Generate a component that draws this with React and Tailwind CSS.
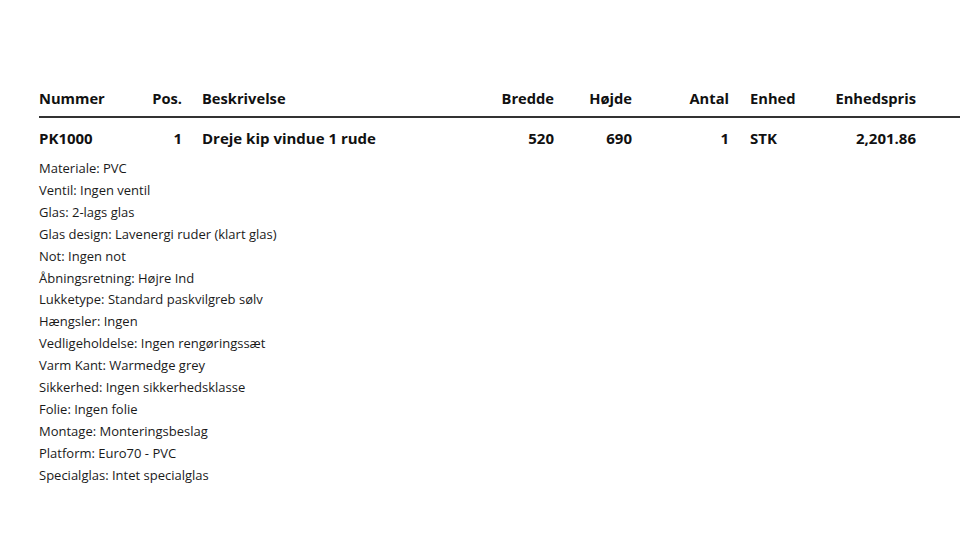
import React from "react";

const details = [
  "Materiale: PVC",
  "Ventil: Ingen ventil",
  "Glas: 2-lags glas",
  "Glas design: Lavenergi ruder (klart glas)",
  "Not: Ingen not",
  "Åbningsretning: Højre Ind",
  "Lukketype: Standard paskvilgreb sølv",
  "Hængsler: Ingen",
  "Vedligeholdelse: Ingen rengøringssæt",
  "Varm Kant: Warmedge grey",
  "Sikkerhed: Ingen sikkerhedsklasse",
  "Folie: Ingen folie",
  "Montage: Monteringsbeslag",
  "Platform: Euro70 - PVC",
  "Specialglas: Intet specialglas",
];

function Row({ cells }) {
  return (
    <div className="flex">
      <div className="w-[103px]">{cells[0]}</div>
      <div className="w-[40px] text-right">{cells[1]}</div>
      <div className="w-[292px] pl-[20px]">{cells[2]}</div>
      <div className="w-[80px] text-right">{cells[3]}</div>
      <div className="w-[78px] text-right">{cells[4]}</div>
      <div className="w-[97px] text-right">{cells[5]}</div>
      <div className="w-[91px] pl-[21px]">{cells[6]}</div>
      <div className="w-[96px] text-right">{cells[7]}</div>
    </div>
  );
}

export default function App() {
  return (
    <div
      className="w-[960px] h-[556px] bg-white overflow-hidden text-[#111]"
      style={{ fontFamily: '"Open Sans", "Noto Sans", sans-serif' }}
    >
      <div className="pl-[39px] pt-[88px]">
        <div className="font-bold text-[14.7px] leading-[20px] pb-[8px] border-b-2 border-[#333] w-[1000px]">
          <Row
            cells={[
              "Nummer",
              "Pos.",
              "Beskrivelse",
              "Bredde",
              "Højde",
              "Antal",
              "Enhed",
              "Enhedspris",
            ]}
          />
        </div>
        <div className="font-bold text-[15px] leading-[20px] mt-[10px]">
          <Row
            cells={[
              "PK1000",
              "1",
              "Dreje kip vindue 1 rude",
              "520",
              "690",
              "1",
              "STK",
              "2,201.86",
            ]}
          />
        </div>
        <div className="mt-[10px] text-[13px] leading-[21.9px] text-[#1a1a1a]">
          {details.map((d) => (
            <div key={d}>{d}</div>
          ))}
        </div>
      </div>
    </div>
  );
}
